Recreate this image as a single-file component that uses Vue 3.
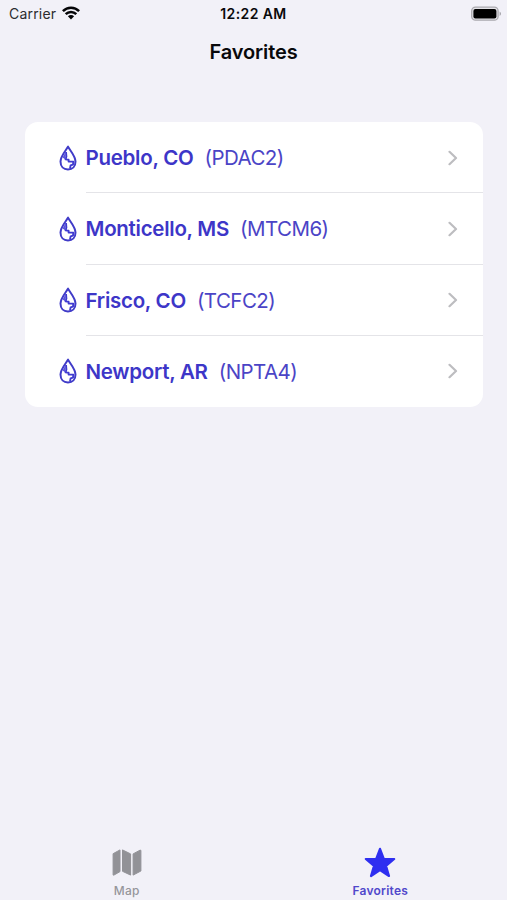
<script setup>
const stations = [
  { name: 'Pueblo, CO', code: 'PDAC2' },
  { name: 'Monticello, MS', code: 'MTCM6' },
  { name: 'Frisco, CO', code: 'TCFC2' },
  { name: 'Newport, AR', code: 'NPTA4' },
]
</script>

<template>
  <div class="screen">
    <header class="status">
      <div class="carrier">
        <span>Carrier</span>
        <svg class="wifi" viewBox="0 0 18 14" width="18" height="14">
          <g fill="none" stroke="#050507" stroke-width="2.5">
            <path d="M0.9 5.1C5.4 0.5 12.6 0.5 17.1 5.1" />
            <path d="M3.7 8.2C6.7 5.2 11.3 5.2 14.3 8.2" />
          </g>
          <path d="M5.9 10.3C7.7 8.5 10.3 8.5 12.1 10.3L9 13.5Z" fill="#050507" />
        </svg>
      </div>
      <div class="time">12:22 AM</div>
      <div class="power">
        <svg viewBox="0 0 32 16" width="32" height="16">
          <rect x="1.7" y="1.2" width="26.4" height="13" rx="3.8" fill="#e4e3e8" stroke="#aaa9ae" stroke-width="1.3" />
          <rect x="3.4" y="3" width="23" height="9.5" rx="2" fill="#000" />
          <path d="M29.6 5.5Q31 6.2 31 7.7T29.6 9.9Z" fill="#a3a2a8" />
        </svg>
      </div>
    </header>

    <h1>Favorites</h1>

    <main>
      <ul class="card">
        <li v-for="s in stations" :key="s.code" class="row">
          <svg class="drop" viewBox="0 0 18 26" width="18" height="26">
            <path d="M9 1.6C7.3 5 1.5 11 1.5 16.5C1.5 21.4 4.5 24.5 9 24.5S16.5 21.4 16.5 16.5C16.5 11 10.7 5 9 1.6Z" fill="none" stroke="#403bc8" stroke-width="2" stroke-linejoin="round" />
            <path d="M7 7L7.4 11.6L6.6 14.4L9.6 14.8V16.6H14.4L14 19.6L11.6 20.4L11 23.4" fill="none" stroke="#3f3ad0" stroke-width="1.9" stroke-linejoin="round" />
            <path d="M7 6L3.6 12.4L6.4 14.6Z" fill="#5a55d8" />
          </svg>
          <div class="label">
            <span class="name">{{ s.name }}</span>
            <span class="code">({{ s.code }})</span>
            <svg class="chevron" viewBox="0 0 10 16" width="10" height="16">
              <path d="M1.5 1.8L8 8L1.5 14.2" fill="none" stroke="#bdbdc0" stroke-width="2.2" stroke-linecap="round" stroke-linejoin="round" />
            </svg>
          </div>
        </li>
      </ul>
    </main>

    <nav class="tabs">
      <div class="tab">
        <svg viewBox="0 0 32 32" width="32" height="32">
          <g fill="#929297" stroke="#929297" stroke-width="1" stroke-linejoin="round">
            <path d="M2.1 6.7L9 2.9V24.6L2.9 28.1Q2.1 28.5 2.1 27.6Z" />
            <path d="M11.5 2.9L19.6 6.9V28.1L11.5 24.3Z" />
            <path d="M22.1 6.9L29 3.2Q29.9 2.8 29.9 3.7V24L22.1 28.1Z" />
          </g>
        </svg>
        <span>Map</span>
      </div>
      <div class="tab active">
        <svg viewBox="0 0 32 32" width="32" height="32">
          <path d="M16 1.8L19.8 12H30.2L22 18.8L25 29L16 23L7 29L10 18.8L1.8 12H12.2Z" fill="#2f2ff0" stroke="#2f2ff0" stroke-width="2.2" stroke-linejoin="round" />
        </svg>
        <span>Favorites</span>
      </div>
    </nav>
  </div>
</template>

<style>
body {
  background: #f2f1f8;
}
</style>

<style scoped>
.screen {
  height: 900px;
  display: flex;
  flex-direction: column;
  background: #f2f1f8;
  font-family: Inter, "Liberation Sans", sans-serif;
  color: #09090b;
}
.status {
  height: 27px;
  display: grid;
  grid-template-columns: 1fr auto 1fr;
  align-items: center;
  font-size: 14px;
}
.carrier {
  display: flex;
  align-items: center;
  gap: 6px;
  padding-left: 9px;
  letter-spacing: 0.2px;
  color: #2c2c30;
}
.wifi {
  margin-top: -2px;
}
.time {
  font-weight: 600;
  font-size: 14px;
  letter-spacing: 0.4px;
}
.power {
  display: flex;
  justify-content: flex-end;
  padding-right: 5px;
}
h1 {
  margin: 0;
  height: 50px;
  line-height: 50px;
  text-align: center;
  font-size: 20px;
  font-weight: 600;
  letter-spacing: -0.1px;
}
main {
  flex: 1;
  padding: 45px 24px 0 25px;
}
.card {
  list-style: none;
  margin: 0;
  padding: 0;
  border-radius: 13px;
  background: #fff;
}
.row {
  height: 71.25px;
  display: flex;
  align-items: center;
  padding-left: 33.5px;
  color: #3d36c8;
}
.drop {
  margin-right: 9px;
}
.label {
  flex: 1;
  height: 100%;
  box-sizing: border-box;
  display: flex;
  align-items: center;
  padding-top: 1px;
  padding-right: 25px;
  font-size: 20.5px;
  border-bottom: 1px solid #e4e4e8;
}
.row:last-child .label {
  border-bottom-color: transparent;
}
.name {
  font-weight: 600;
  letter-spacing: -0.27px;
}
.code {
  margin-left: 11px;
  letter-spacing: -0.55px;
  color: #4b44c6;
}
.chevron {
  margin-left: auto;
}
.tabs {
  height: 56px;
  display: flex;
}
.tab {
  flex: 1;
  display: flex;
  flex-direction: column;
  align-items: center;
  gap: 5px;
  padding-top: 3px;
  box-sizing: border-box;
  font-size: 12px;
  line-height: 14px;
  font-weight: 500;
  letter-spacing: 0.25px;
  color: #96969b;
}
.tab.active {
  font-weight: 600;
  color: #5148cb;
}
</style>
